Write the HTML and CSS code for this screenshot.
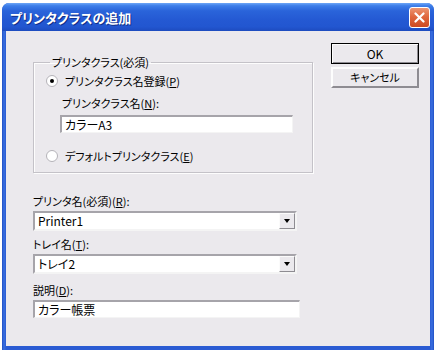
FILE: index.html
```html
<!DOCTYPE html>
<html lang="ja">
<head>
  <meta charset="UTF-8">
  <title>プリンタクラスの追加</title>
  <link rel="stylesheet" href="styles.css">
</head>
<body>
  <div class="window">
    <div class="titlebar">
      <span class="title">プリンタクラスの追加</span>
      <span class="close">
        <svg width="11" height="11" viewBox="0 0 11 11">
          <path d="M1.5 1.5 L9.5 9.5 M9.5 1.5 L1.5 9.5" stroke="#fff" stroke-width="2.2" stroke-linecap="round"/>
        </svg>
      </span>
    </div>

    <div class="client">
      <div class="main">
        <fieldset class="group">
          <legend>プリンタクラス(必須)</legend>
          <div class="radio-row">
            <svg class="radio" width="12" height="12" viewBox="0 0 12 12">
              <circle cx="6" cy="6" r="5.5" fill="#fff" stroke="#b4b2b8"/>
              <circle cx="6" cy="6" r="2" fill="#000"/>
            </svg>
            <span>プリンタクラス名登録(<u>P</u>)</span>
          </div>
          <div class="sub">
            <div class="label sub-label">プリンタクラス名(<u>N</u>):</div>
            <div class="textbox sub-box">カラーA3</div>
          </div>
          <div class="radio-row radio-last">
            <svg class="radio" width="12" height="12" viewBox="0 0 12 12">
              <circle cx="6" cy="6" r="5.5" fill="#fff" stroke="#b4b2b8"/>
            </svg>
            <span>デフォルトプリンタクラス(<u>E</u>)</span>
          </div>
        </fieldset>

        <div class="field field-first">
          <div class="label">プリンタ名(必須)(<u>R</u>):</div>
          <div class="combo">
            <span class="combo-text">Printer1</span>
            <span class="combo-btn"><span class="arrow"></span></span>
          </div>
        </div>

        <div class="field field-tray">
          <div class="label">トレイ名(<u>T</u>):</div>
          <div class="combo">
            <span class="combo-text">トレイ2</span>
            <span class="combo-btn"><span class="arrow"></span></span>
          </div>
        </div>

        <div class="field field-desc">
          <div class="label">説明(<u>D</u>):</div>
          <div class="textbox wide-box">カラー帳票</div>
        </div>
      </div>

      <div class="buttons">
        <div class="btn btn-default">OK</div>
        <div class="btn">キャンセル</div>
      </div>
    </div>
  </div>
</body>
</html>
```

FILE: styles.css
```css
body {
  margin: 0;
  background: #ffffff;
  font-family: "Noto Sans CJK JP", "Liberation Sans", sans-serif;
  font-size: 11px;
  font-feature-settings: "palt";
  color: #000;
}
u {
  text-decoration-thickness: 1px;
  text-underline-offset: 1px;
}

/* window frame */
.window {
  margin: 3px 2px 0 2px;
  width: 432px;
  height: 347px;
  display: flex;
  flex-direction: column;
  border-radius: 7px 7px 0 0;
  background: linear-gradient(to right, #1f4fc4 0, #3a6fe0 2px, #2a5bd3 4px, #2a5bd3 428px, #3a6fe0 430px, #1f4fc4 432px);
  overflow: hidden;
}
.titlebar {
  height: 28px;
  flex-shrink: 0;
  display: flex;
  align-items: center;
  justify-content: space-between;
  padding: 0 4px 0 8px;
  background: linear-gradient(to bottom, #6ea6f6 0%, #3d7ee9 10%, #2a64da 28%, #2459d3 60%, #2256d0 85%, #1d4bbf 100%);
}
.title {
  color: #fff;
  font-size: 13px;
  font-weight: bold;
  letter-spacing: 0;
  text-shadow: 1px 1px 0 #0f2f8a;
  margin-top: 1px;
}
.close {
  width: 19px;
  height: 19px;
  display: flex;
  align-items: center;
  justify-content: center;
  border: 1px solid #fff;
  border-radius: 3px;
  background: linear-gradient(to bottom, #ec9572 0%, #e0683f 45%, #cd4a22 100%);
}

.client {
  flex: 1;
  margin: 0 4px 4px 4px;
  background: #ebe9ed;
  display: flex;
  align-items: flex-start;
  padding: 12px 0 0 27px;
}
.main {
  width: 280px;
  margin-top: 12px;
}

/* group box */
.group {
  margin: 0;
  padding: 5px 8px 9px 12px;
  border: 1px solid #c4c2c8;
  box-shadow: inset 1px 1px 0 #fdfdfd, 1px 1px 0 #fdfdfd;
  min-width: 0;
}
.group legend {
  padding: 0 2px;
  margin-left: 4px;
  line-height: 14px;
}
.radio-row {
  height: 14px;
  display: flex;
  align-items: center;
  gap: 7px;
}
.radio {
  flex-shrink: 0;
}
.sub {
  margin: 8px 0 0 14px;
}
.sub-label {
  margin-left: 2px;
}
.sub-box {
  width: 224px;
  margin-top: 5px;
}
.radio-last {
  margin-top: 16px;
}

.label {
  line-height: 14px;
  white-space: nowrap;
}

/* sunken text box */
.textbox {
  height: 15px;
  line-height: 15px;
  padding: 0 3px;
  background: #fff;
  border-style: solid;
  border-width: 2px 1px 1px 2px;
  border-color: #a6a4aa #f4f4f4 #f4f4f4 #a6a4aa;
  font-size: 12px;
}
.wide-box {
  width: 258px;
}

.field-first {
  margin-top: 21px;
}
.field-tray {
  margin-top: 6px;
}
.field-desc {
  margin-top: 9px;
}
.field .combo,
.field .textbox {
  margin-top: 3px;
}

/* combo box */
.combo {
  width: 260px;
  height: 16px;
  display: flex;
  align-items: stretch;
  justify-content: space-between;
  background: #fff;
  border-style: solid;
  border-width: 2px;
  border-color: #a6a4aa #f4f4f4 #f4f4f4 #a6a4aa;
}
.combo-text {
  padding-left: 3px;
  line-height: 16px;
  font-size: 12px;
}
.combo-btn {
  width: 14px;
  display: flex;
  align-items: center;
  justify-content: center;
  background: #ebe9ed;
  border-style: solid;
  border-width: 1px;
  border-color: #fbfbfb #8e8c92 #8e8c92 #fbfbfb;
}
.arrow {
  width: 0;
  height: 0;
  border-left: 3.5px solid transparent;
  border-right: 3.5px solid transparent;
  border-top: 4px solid #000;
}

/* buttons */
.buttons {
  margin-left: 18px;
  display: flex;
  flex-direction: column;
  gap: 3px;
}
.btn {
  width: 84px;
  height: 17px;
  line-height: 17px;
  text-align: center;
  background: #ebe9ed;
  border-style: solid;
  border-width: 2px;
  border-color: #fdfdfd #8e8c92 #8e8c92 #fdfdfd;
  font-size: 11px;
}
.btn-default {
  border: 1px solid #000;
  height: 19px;
  width: 86px;
  line-height: 19px;
  box-shadow: inset 1px 1px 0 #fdfdfd, inset -1px -1px 0 #8e8c92;
  font-size: 12px;
}
```
